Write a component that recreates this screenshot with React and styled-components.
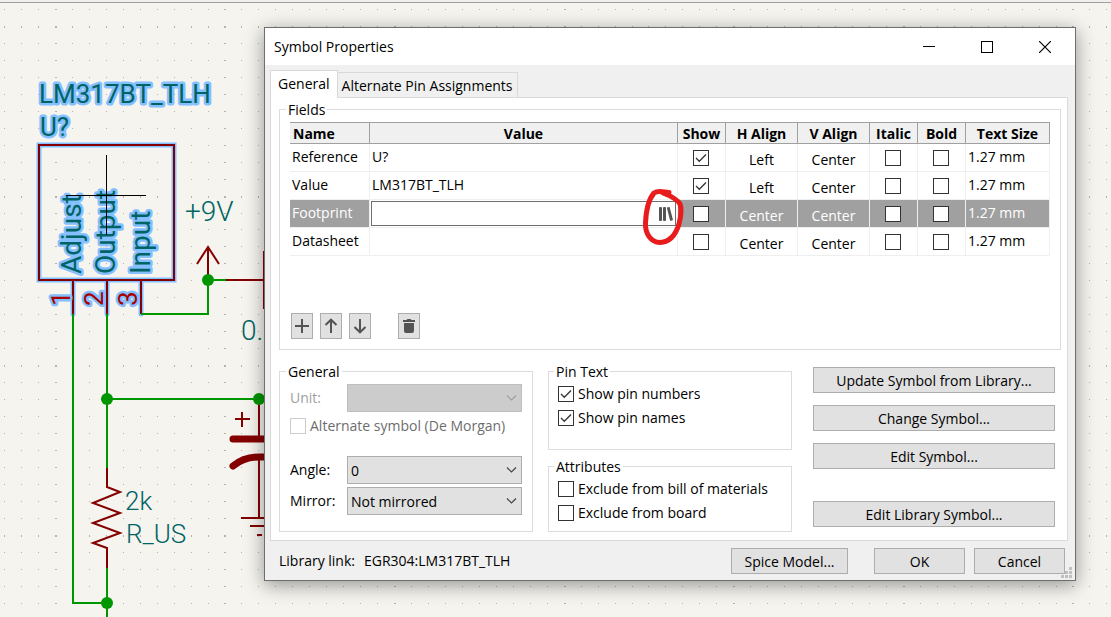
import React, { useState } from "react";
import styled, { createGlobalStyle, css } from "styled-components";

const GlobalStyle = createGlobalStyle`
  *, *::before, *::after { box-sizing: border-box; }
  body { margin: 0; }
  body, button, input, select, table {
    font-family: "Open Sans", "Noto Sans", sans-serif;
    font-size: 14px;
    line-height: 18px;
    color: #000;
  }
`;

/* ---------- schematic canvas ---------- */

const Desktop = styled.main`
  position: relative;
  min-height: 100vh;
  padding: 27px 35px 36px 264px;
  background: #f5f4ef;
  overflow: hidden;
`;

const Canvas = styled.svg`
  position: absolute;
  inset: 0;
  width: 100%;
  height: 100%;
`;

const Label = styled.text`
  font-family: Roboto, "Liberation Sans", sans-serif;
  font-size: ${(p) => (p.$large ? 28 : 26)}px;
  font-weight: ${(p) => (p.$selected ? 400 : 300)};
  fill: ${(p) => (p.$pin ? "#a90000" : "#006464")};
  ${(p) =>
    p.$selected &&
    css`
      stroke: #84bfff;
      stroke-width: 5px;
      stroke-linejoin: round;
      paint-order: stroke;
    `}
`;

const GRID = 16.96;

function gridPath(columns, rows) {
  let d = "";
  for (let r = 0; r < rows; r++) {
    const y = Math.round(9 + r * GRID);
    const h = r % 10 === 1 ? 2 : 1;
    for (let c = 0; c < columns; c++) {
      const x = Math.round(4 + c * GRID);
      const w = c % 10 === 3 ? 2 : 1;
      d += `M${x} ${y}h${w}v${h}h-${w}z`;
    }
  }
  return d;
}

const DOTS = gridPath(120, 75);
const SYMBOL_BODY = "M39 145H174V280H39Z M73 281V314 M107 281V314 M141 281V314";

function Schematic() {
  return (
    <Canvas aria-label="Schematic">
      <path d={DOTS} fill="#b4b3af" shapeRendering="crispEdges" />
      <rect width="100%" height="2" fill="#f0f0f0" />
      <rect y="2" width="100%" height="1" fill="#a0a0a0" />

      <g fill="none" strokeWidth="2">
        <path d={SYMBOL_BODY} stroke="#84bfff" strokeWidth="5" strokeLinecap="round" />
        <path d={SYMBOL_BODY} stroke="#840000" />
        <g stroke="#009600">
          <path d="M73 314V603H107" />
          <path d="M107 314V468 M107 567V617 M107 399H259" />
          <path d="M141 314H208V280H227" />
        </g>
        <g stroke="#840000">
          <path d="M226 280H264 M264 251V309" />
          <path d="M208 280V247 M197 264L208 247L219 264" />
          <path d="M107 468V487L120 492L93 503L120 513L93 523L120 533L93 543L107 548V568" />
          <path d="M259 399V439 M259 457V518 M241 518H277 M250 526H268 M257 535H262" />
          <path d="M235 419H250 M242 412V427" />
          <path
            d="M233 439H285 M233 466Q244 457 259 457H270"
            strokeWidth="7"
            strokeLinecap="round"
          />
        </g>
      </g>

      <g fill="#009600">
        <circle cx="208" cy="280" r="6" />
        <circle cx="107" cy="399" r="6" />
        <circle cx="259" cy="399" r="6" />
        <circle cx="107" cy="603" r="6" />
      </g>

      <Label $selected x="39" y="103">LM317BT_TLH</Label>
      <Label $selected x="40" y="136">U?</Label>
      <Label $selected $large transform="translate(81 274) rotate(-90)">Adjust</Label>
      <Label $selected $large transform="translate(115 274) rotate(-90)">Output</Label>
      <Label $selected $large transform="translate(150 274) rotate(-90)">Input</Label>
      <Label $selected $pin transform="translate(70 306) rotate(-90)">1</Label>
      <Label $selected $pin transform="translate(103 306) rotate(-90)">2</Label>
      <Label $selected $pin transform="translate(137 306) rotate(-90)">3</Label>
      <Label $large x="185" y="221">+9V</Label>
      <Label $large x="241" y="340">0.1u</Label>
      <Label x="125" y="510">2k</Label>
      <Label x="126" y="543">R_US</Label>
      <path d="M66 195.500H146 M106.500 155V235" stroke="#000" />
    </Canvas>
  );
}

/* ---------- dialog frame ---------- */

const Dialog = styled.section`
  position: relative;
  min-width: 812px;
  border: 1px solid #6e6e6e;
  background: #f0f0f0;
  box-shadow: 0 4px 18px rgba(0, 0, 0, 0.4);
`;

const TitleBar = styled.header`
  display: flex;
  align-items: center;
  justify-content: space-between;
  height: 37px;
  padding-left: 9px;
  background: #fff;
`;

const Title = styled.h1`
  margin: 0;
  font-size: 14px;
  font-weight: 400;
`;

const WindowButtons = styled.div`
  display: flex;
  padding-right: 1px;
`;

const WindowButton = styled.button`
  display: grid;
  place-items: center;
  width: 58px;
  height: 36px;
  padding: 0;
  border: 0;
  background: none;
`;

const TabList = styled.div`
  display: flex;
  align-items: flex-end;
  margin: 5px 7px 0 5px;
`;

const Tab = styled.button`
  height: ${(p) => (p.$active ? 28 : 25)}px;
  padding: ${(p) => (p.$active ? "0 7px 2px" : "1px 4px 0")};
  border: 1px solid #d9d9d9;
  border-bottom: 0;
  border-left-width: ${(p) => (p.$active ? 1 : 0)}px;
  margin-bottom: ${(p) => (p.$active ? -1 : 0)}px;
  background: ${(p) => (p.$active ? "#fff" : "#f0f0f0")};
  white-space: nowrap;
  z-index: 1;
`;

const TabPage = styled.div`
  margin: 0 7px 0 5px;
  padding: 3px 6px 8px 8px;
  border: 1px solid #dadada;
  background: #fff;
`;

const Group = styled.fieldset`
  min-width: 0;
  margin: 0;
  padding: ${(p) => p.$padding};
  border: 1px solid #dcdcdc;
`;

const Legend = styled.legend`
  height: 17px;
  margin-left: -4px;
  padding: 0 2px;
  line-height: 17px;
`;

/* ---------- controls ---------- */

const PushButton = styled.button`
  height: 26px;
  min-width: ${(p) => p.$width || 0}px;
  padding: 2px 8px 0;
  border: 1px solid #adadad;
  background: #e1e1e1;
  white-space: nowrap;
`;

const IconButton = styled.button`
  display: grid;
  place-items: center;
  width: 22px;
  height: 26px;
  padding: 0;
  border: 1px solid #adadad;
  background: #e1e1e1;
`;

const BoxWrap = styled.span`
  display: inline-grid;
  vertical-align: top;

  & > * { grid-area: 1 / 1; }
  & > svg { pointer-events: none; }
  & > input:not(:checked) + svg { visibility: hidden; }
`;

const Box = styled.input`
  appearance: none;
  width: 16px;
  height: 16px;
  margin: 0;
  border: 1px solid #333;
  background: #fff;
  &:disabled { border-color: #ccc; }
`;

function CheckBox(props) {
  const [on, setOn] = useState(Boolean(props.checked));
  return (
    <BoxWrap>
      <Box {...props} type="checkbox" checked={on} onChange={() => setOn(!on)} />
      <svg width="16" height="16" fill="none" stroke="#333" strokeWidth="1.300">
        <path d="M3 8L6.300 11.300L13 4.500" />
      </svg>
    </BoxWrap>
  );
}

const CheckLabel = styled.label`
  display: flex;
  align-items: center;
  gap: 4px;
  height: ${(p) => p.$height || 24}px;
  color: ${(p) => (p.$muted ? "#6d6d6d" : "#000")};
  white-space: nowrap;
`;

const FormRow = styled.div`
  display: flex;
  align-items: center;
  height: 28px;
  margin-top: ${(p) => p.$gap || 0}px;
`;

const FormLabel = styled.label`
  flex: 0 0 57px;
  color: ${(p) => (p.$muted ? "#a0a0a0" : "#000")};
`;

const SelectWrap = styled.span`
  flex: 1;
  display: grid;
  align-items: center;

  & > * { grid-area: 1 / 1; }
  & > svg {
    justify-self: end;
    margin-right: 5px;
    pointer-events: none;
  }
`;

const Select = styled.select`
  appearance: none;
  width: 100%;
  height: 28px;
  padding: 2px 20px 0 3px;
  border: 1px solid #adadad;
  border-radius: 0;
  background: #e1e1e1;
  opacity: 1;
  &:disabled { background: #ccc; border-color: #bfbfbf; }
`;

function Choice({ id, options, disabled }) {
  return (
    <SelectWrap>
      <Select id={id} disabled={disabled}>
        {options.map((o) => (
          <option key={o}>{o}</option>
        ))}
      </Select>
      <svg width="11" height="8" fill="none" stroke={disabled ? "#a0a0a0" : "#444"} strokeWidth="1.200">
        <path d="M1 1.500L5.500 6L10 1.500" />
      </svg>
    </SelectWrap>
  );
}

/* ---------- fields table ---------- */

const GridArea = styled.div`
  min-height: 191px;
`;

const FieldTable = styled.table`
  width: 100%;
  table-layout: fixed;
  border-collapse: separate;
  border-spacing: 0;
`;

const HeadCell = styled.th`
  width: ${(p) => (p.$width ? `${p.$width}px` : "auto")};
  height: 22px;
  padding: 1px 3px 0;
  border: solid #a0a0a0;
  border-width: 1px 1px 1px 0;
  background: #f0f0f0;
  font-weight: 700;
  text-align: ${(p) => p.$align || "center"};
  white-space: nowrap;
`;

const Row = styled.tr`
  background: ${(p) => (p.$selected ? "#a0a0a0" : "#fff")};
  color: ${(p) => (p.$selected ? "#fff" : "#000")};
`;

const Cell = styled.td`
  position: relative;
  height: 28px;
  padding: ${(p) => (p.$choice ? "5px 0 0" : "0 2px 2px")};
  border: solid #efefef;
  border-width: 0 1px 1px 0;
  text-align: ${(p) => (p.$center ? "center" : "left")};
  line-height: 18px;
  white-space: nowrap;
`;

const CheckCell = styled(Cell)`
  padding: 0 1px 0 0;
  line-height: 16px;
  text-align: center;
`;

const EditCell = styled(Cell)`
  padding: 1px;
  background: #fff;
`;

const Editor = styled.div`
  display: flex;
  align-items: center;
  height: 25px;
  border: 1px solid #6e6e6e;
`;

const EditorInput = styled.input`
  flex: 1;
  min-width: 0;
  padding: 0 2px;
  border: 0;
  outline: 0;
  background: none;
`;

const LibraryButton = styled.button`
  display: grid;
  place-items: center;
  width: 20px;
  height: 22px;
  padding: 0;
  border: 0;
  background: #fff;
`;

const Marker = styled.svg`
  position: absolute;
  top: -12px;
  right: -9px;
  z-index: 2;
  pointer-events: none;
`;

const Toolbar = styled.div`
  display: flex;
  gap: 7px;
  padding-left: 1px;

  & > :last-child { margin-left: 20px; }
`;

const COLUMNS = [
  ["Name", 80, "left"],
  ["Value"],
  ["Show", 48],
  ["H Align", 72],
  ["V Align", 72],
  ["Italic", 48],
  ["Bold", 48],
  ["Text Size", 84],
];

const FIELDS = [
  { name: "Reference", value: "U?", show: true, h: "Left" },
  { name: "Value", value: "LM317BT_TLH", show: true, h: "Left" },
  { name: "Footprint", selected: true, h: "Center" },
  { name: "Datasheet", value: "", h: "Center" },
];

function FieldRow({ field }) {
  return (
    <Row $selected={field.selected}>
      <Cell>{field.name}</Cell>
      {field.selected ? (
        <EditCell>
          <Editor>
            <EditorInput aria-label="Footprint value" />
            <LibraryButton aria-label="Browse footprint libraries">
              <svg width="16" height="16" fill="#545454">
                <rect x="2" y="1" width="3" height="14" rx="1" />
                <rect x="6" y="1" width="3" height="14" rx="1" />
                <path d="M9.800 1.500L12.600 1L16 14L13.200 15Z" />
              </svg>
            </LibraryButton>
          </Editor>
          <Marker width="46" height="60" fill="none" stroke="#e81c1c" strokeWidth="5" strokeLinecap="round" strokeLinejoin="round">
            <path d="M29 4.500C23 4 18 2 14 5C8 12 6 24 5.500 35C5 46 11 54 20 54.500C30 54 36 46 39 36C41 28 42 21 40 16C37 11 31 8 23 5" />
          </Marker>
        </EditCell>
      ) : (
        <Cell>{field.value}</Cell>
      )}
      <CheckCell><CheckBox checked={field.show} aria-label={`Show ${field.name}`} /></CheckCell>
      <Cell $center $choice>{field.h}</Cell>
      <Cell $center $choice>Center</Cell>
      <CheckCell><CheckBox aria-label={`${field.name} italic`} /></CheckCell>
      <CheckCell><CheckBox aria-label={`${field.name} bold`} /></CheckCell>
      <Cell>1.27 mm</Cell>
    </Row>
  );
}

function Icon({ children, ...rest }) {
  return (
    <svg width="16" height="18" fill="none" stroke="#545454" strokeWidth="2" {...rest}>
      {children}
    </svg>
  );
}

/* ---------- lower part ---------- */

const Options = styled.div`
  display: grid;
  grid-template-columns: 254fr 244fr 254fr;
  column-gap: 15px;
  margin-top: 13px;
`;

const Stack = styled.div`
  display: flex;
  flex-direction: column;
  gap: 8px;
`;

const Actions = styled.div`
  display: flex;
  flex-direction: column;
  gap: 12px;
  padding: 4px 6px 0;

  & > :last-child { margin-top: 20px; }
`;

const Footer = styled.footer`
  display: flex;
  align-items: center;
  gap: 9px;
  padding: 7px 10px 6px 14px;
`;

const LinkText = styled.span`
  flex: 1;
`;

const FooterGap = styled.span`
  width: 8px;
`;

const Grip = styled.svg`
  position: absolute;
  right: 3px;
  bottom: 2px;
`;

export default function App() {
  return (
    <Desktop>
      <GlobalStyle />
      <Schematic />
      <Dialog role="dialog" aria-label="Symbol Properties">
        <TitleBar>
          <Title>Symbol Properties</Title>
          <WindowButtons>
            <WindowButton aria-label="Minimize">
              <svg width="12" height="12" shapeRendering="crispEdges"><path d="M0 5.500H12" stroke="#000" /></svg>
            </WindowButton>
            <WindowButton aria-label="Maximize">
              <svg width="12" height="12" fill="none" shapeRendering="crispEdges"><rect x="0.500" y="0.500" width="11" height="11" stroke="#000" /></svg>
            </WindowButton>
            <WindowButton aria-label="Close">
              <svg width="12" height="12"><path d="M0 0L12 12M12 0L0 12" stroke="#000" strokeWidth="1.200" /></svg>
            </WindowButton>
          </WindowButtons>
        </TitleBar>

        <TabList role="tablist">
          <Tab role="tab" aria-selected="true" $active>General</Tab>
          <Tab role="tab" aria-selected="false">Alternate Pin Assignments</Tab>
        </TabList>

        <TabPage role="tabpanel">
          <Group $padding="4px 10px 10px">
            <Legend>Fields</Legend>
            <GridArea>
              <FieldTable>
                <thead>
                  <tr>
                    {COLUMNS.map(([name, width, align]) => (
                      <HeadCell key={name} $width={width} $align={align}>{name}</HeadCell>
                    ))}
                  </tr>
                </thead>
                <tbody>
                  {FIELDS.map((f) => <FieldRow key={f.name} field={f} />)}
                </tbody>
              </FieldTable>
            </GridArea>
            <Toolbar>
              <IconButton aria-label="Add field"><Icon><path d="M1 9H15M8 2V16" /></Icon></IconButton>
              <IconButton aria-label="Move up"><Icon><path d="M8 16V3M2.500 8L8 2.700L13.500 8" /></Icon></IconButton>
              <IconButton aria-label="Move down"><Icon><path d="M8 2V15M2.500 10L8 15.300L13.500 10" /></Icon></IconButton>
              <IconButton aria-label="Delete field">
                <Icon stroke="none" fill="#545454">
                  <path d="M2 3H5.500L6.500 2H9.500L10.500 3H14V5H2Z M3 6H13V14Q13 16 11 16H5Q3 16 3 14Z" />
                </Icon>
              </IconButton>
            </Toolbar>
          </Group>

          <Options>
            <Group $padding="4px 10px 16px">
              <Legend>General</Legend>
              <FormRow>
                <FormLabel htmlFor="unit" $muted>Unit:</FormLabel>
                <Choice id="unit" options={[""]} disabled />
              </FormRow>
              <CheckLabel $height={28} $muted>
                <CheckBox disabled />
                Alternate symbol (De Morgan)
              </CheckLabel>
              <FormRow $gap={16}>
                <FormLabel htmlFor="angle">Angle:</FormLabel>
                <Choice id="angle" options={["0", "90", "180", "270"]} />
              </FormRow>
              <FormRow $gap={3}>
                <FormLabel htmlFor="mirror">Mirror:</FormLabel>
                <Choice id="mirror" options={["Not mirrored", "Around X axis", "Around Y axis"]} />
              </FormRow>
            </Group>

            <Stack>
              <Group $padding="2px 9px 19px">
                <Legend>Pin Text</Legend>
                <CheckLabel><CheckBox checked />Show pin numbers</CheckLabel>
                <CheckLabel><CheckBox checked />Show pin names</CheckLabel>
              </Group>
              <Group $padding="2px 9px 6px">
                <Legend>Attributes</Legend>
                <CheckLabel><CheckBox />Exclude from bill of materials</CheckLabel>
                <CheckLabel><CheckBox />Exclude from board</CheckLabel>
              </Group>
            </Stack>

            <Actions>
              <PushButton>Update Symbol from Library...</PushButton>
              <PushButton>Change Symbol...</PushButton>
              <PushButton>Edit Symbol...</PushButton>
              <PushButton>Edit Library Symbol...</PushButton>
            </Actions>
          </Options>
        </TabPage>

        <Footer>
          <span>Library link:</span>
          <LinkText>EGR304:LM317BT_TLH</LinkText>
          <PushButton $width={117}>Spice Model...</PushButton>
          <FooterGap />
          <PushButton $width={91}>OK</PushButton>
          <PushButton $width={91}>Cancel</PushButton>
        </Footer>
        <Grip width="11" height="11" fill="#bfbfbf" shapeRendering="crispEdges">
          <path d="M8 0h3v3h-3z M4 4h3v3h-3z M8 4h3v3h-3z M0 8h3v3h-3z M4 8h3v3h-3z M8 8h3v3h-3z" />
        </Grip>
      </Dialog>
    </Desktop>
  );
}
